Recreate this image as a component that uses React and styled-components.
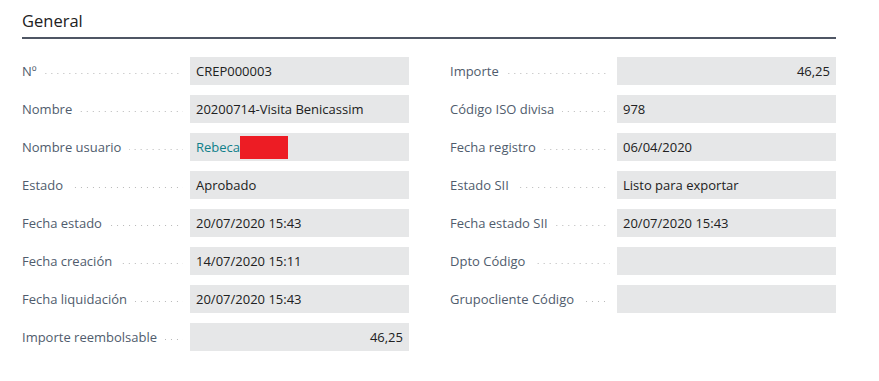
import React from "react";
import styled, { createGlobalStyle } from "styled-components";

const GlobalStyle = createGlobalStyle`
  body {
    margin: 0;
    background: #ffffff;
    font-family: "Open Sans", "Noto Sans", sans-serif;
  }
`;

const Page = styled.div`
  width: 814px;
  padding: 0 0 0 22px;
`;

const Header = styled.h2`
  margin: 0;
  padding-top: 10px;
  height: 27px;
  font-size: 16.5px;
  font-weight: 400;
  color: #212121;
  border-bottom: 2px solid #4f5664;
  line-height: 22px;
`;

const Columns = styled.div`
  display: grid;
  grid-template-columns: 387px 387px;
  column-gap: 41px;
  padding-top: 18px;
`;

const Column = styled.div`
  display: flex;
  flex-direction: column;
  gap: 10px;
`;

const Row = styled.div`
  display: flex;
  align-items: center;
  height: 28px;
`;

const LabelCell = styled.div`
  width: ${({ $w }) => $w}px;
  display: flex;
  align-items: center;
  padding-right: 7px;
  box-sizing: border-box;
`;

const Label = styled.span`
  font-size: 13px;
  color: #505c6d;
  white-space: nowrap;
`;

const Leader = styled.span`
  flex: 1;
  min-width: 0;
  height: 1px;
  margin-left: 8px;
  margin-top: 4px;
  background-image: linear-gradient(to right, #b8b8b8 1px, transparent 1px);
  background-size: 6px 1px;
  background-repeat: repeat-x;
  background-position: right center;
`;

const Value = styled.div`
  width: 219px;
  height: 28px;
  background: #e6e7e8;
  display: flex;
  align-items: center;
  justify-content: ${({ $right }) => ($right ? "flex-end" : "flex-start")};
  padding: 0 6px;
  box-sizing: border-box;
  font-size: 13px;
  color: #212121;
  white-space: nowrap;
`;

const Link = styled.span`
  color: #10808a;
`;

const Redacted = styled.span`
  display: inline-block;
  width: 48px;
  height: 23px;
  background: #ed1c24;
  margin-top: 1px;
`;

const left = [
  { label: "Nº", value: "CREP000003" },
  { label: "Nombre", value: "20200714-Visita Benicassim" },
  { label: "Nombre usuario", value: "user" },
  { label: "Estado", value: "Aprobado" },
  { label: "Fecha estado", value: "20/07/2020 15:43" },
  { label: "Fecha creación", value: "14/07/2020 15:11" },
  { label: "Fecha liquidación", value: "20/07/2020 15:43" },
  { label: "Importe reembolsable", value: "46,25", right: true },
];

const right = [
  { label: "Importe", value: "46,25", right: true },
  { label: "Código ISO divisa", value: "978" },
  { label: "Fecha registro", value: "06/04/2020" },
  { label: "Estado SII", value: "Listo para exportar" },
  { label: "Fecha estado SII", value: "20/07/2020 15:43" },
  { label: "Dpto Código", value: "" },
  { label: "Grupocliente Código", value: "" },
];

const Field = ({ label, value, right, labelWidth }) => (
  <Row>
    <LabelCell $w={labelWidth}>
      <Label>{label}</Label>
      <Leader />
    </LabelCell>
    <Value $right={right}>
      {value === "user" ? (
        <>
          <Link>Rebeca</Link>
          <Redacted />
        </>
      ) : (
        value
      )}
    </Value>
  </Row>
);

export default function App() {
  return (
    <Page>
      <GlobalStyle />
      <Header>General</Header>
      <Columns>
        <Column>
          {left.map((f) => (
            <Field key={f.label} {...f} labelWidth={168} />
          ))}
        </Column>
        <Column>
          {right.map((f) => (
            <Field key={f.label} {...f} labelWidth={167} />
          ))}
        </Column>
      </Columns>
    </Page>
  );
}
